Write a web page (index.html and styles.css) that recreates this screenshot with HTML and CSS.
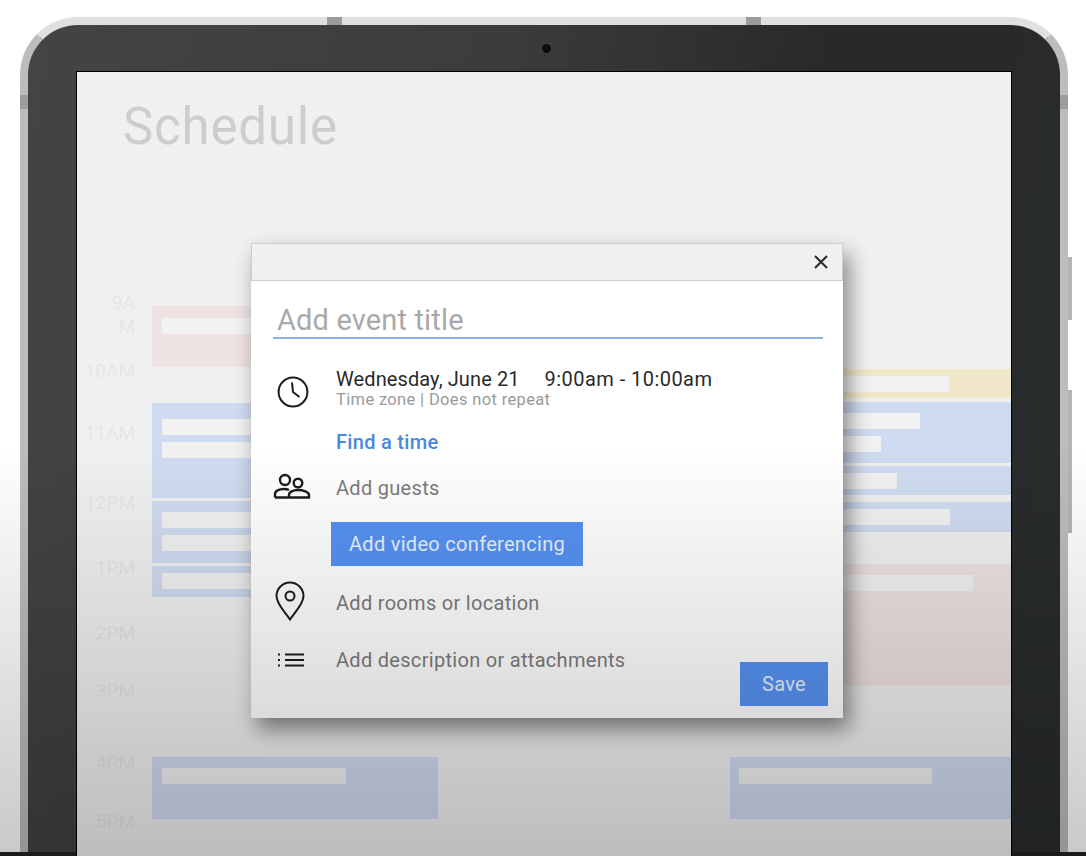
FILE: index.html
```html
<!DOCTYPE html>
<html lang="en">
<head>
<meta charset="UTF-8">
<meta name="viewport" content="width=device-width, initial-scale=1.0">
<title>Schedule</title>
<link rel="stylesheet" href="styles.css">
</head>
<body>

  <div class="tablet">
    <span class="side-btn side-btn-top"></span>
    <span class="side-btn side-btn-long"></span>
    <span class="notch notch-top-l"></span>
    <span class="notch notch-top-r"></span>
    <span class="notch notch-side-l"></span>
    <span class="notch notch-side-r"></span>
    <span class="camera"></span>

    <div class="screen">
      <h1 class="page-title">Schedule</h1>
      <div class="day-tabs"><span class="tab-line"></span><span class="tab-line tab-line-short"></span></div>

      <div class="calendar">
        <div class="hours">
          <div class="hour">9A<br>M</div>
          <div class="hour hour-10">10AM</div>
          <div class="hour hour-11">11AM</div>
          <div class="hour hour-12">12PM</div>
          <div class="hour hour-1">1PM</div>
          <div class="hour hour-2">2PM</div>
          <div class="hour hour-3">3PM</div>
          <div class="hour hour-4">4PM</div>
          <div class="hour hour-5">5PM</div>
        </div>

        <div class="day day-left">
          <div class="event red l1"><div class="bar"></div></div>
          <div class="event blue l2"><div class="bar"></div><div class="bar"></div></div>
          <div class="event blue l3"><div class="bar"></div><div class="bar"></div></div>
          <div class="event blue l4"><div class="bar"></div></div>
          <div class="event blue l5"><div class="bar bar-184"></div></div>
        </div>

        <div class="day day-right">
          <div class="event yellow r1"><div class="bar bar-210"></div></div>
          <div class="event blue r2"><div class="bar bar-181"></div><div class="bar bar-142"></div></div>
          <div class="event blue r3"><div class="bar bar-158"></div></div>
          <div class="event blue r4"><div class="bar bar-211"></div></div>
          <div class="event red r5"><div class="bar bar-234"></div></div>
          <div class="event blue r6"><div class="bar bar-193"></div></div>
        </div>
      </div>

      <div class="modal">
        <div class="modal-head">
          <svg class="close-icon" width="16" height="16" viewBox="0 0 16 16"><path d="M2 2l12 12M14 2L2 14"/></svg>
        </div>
        <div class="modal-body">
          <div class="event-title">Add event title</div>

          <div class="row row-when">
            <svg class="icon" width="32" height="32" viewBox="0 0 32 32"><circle cx="16" cy="16" r="14.4"/><path d="M15 6.5l1 9.5 6.5 5"/></svg>
            <div>
              <div class="when"><span class="when-date">Wednesday, June 21</span><span>9:00am - 10:00am</span></div>
              <div class="when-sub">Time zone | Does not repeat</div>
            </div>
          </div>

          <a class="find-time">Find a time</a>

          <div class="row row-guests">
            <svg class="icon icon-guests" width="38" height="26" viewBox="0 0 38 26"><circle cx="12" cy="7" r="5"/><circle cx="25" cy="10" r="4.300"/><path d="M2 24.500v-3.500c0-3 4-5 9-5 2 0 3.800.4 5 1M16 24.500v-2.500c0-3 4-5 9-5s11 2 11 5v2.500zM2 24.500h14"/></svg>
            <span class="row-text">Add guests</span>
          </div>

          <button class="btn btn-video">Add video conferencing</button>

          <div class="row row-rooms">
            <svg class="icon" width="30" height="40" viewBox="0 0 30 40"><path d="M15 38.500C10 31 1.500 23 1.500 15a13.500 13.500 0 0 1 27 0c0 8-8.500 16-13.500 23.500z"/><circle cx="15" cy="15" r="4.500"/></svg>
            <span class="row-text">Add rooms or location</span>
          </div>

          <div class="modal-foot">
            <div class="row">
              <svg class="icon icon-list" width="28" height="16" viewBox="0 0 28 16"><path d="M8 2.500h19M8 8h19M8 13.500h19M1 2.500h2M1 8h2M1 13.500h2"/></svg>
              <span class="row-text">Add description or attachments</span>
            </div>
            <button class="btn btn-save">Save</button>
          </div>
        </div>
      </div>
    </div>
  </div>
  <div class="bottom-strip"></div>
  <div class="fade"></div>

</body>
</html>
```

FILE: styles.css
```css
* {
  box-sizing: border-box;
}

html, body {
  height: 856px;
}

body {
  margin: 0;
  overflow: hidden;
  background-color: #fff;
  font-family: Roboto, 'Liberation Sans', sans-serif;
  position: relative;
}

/* darkening that runs over the whole lower half of the frame */
.fade {
  position: absolute;
  inset: 0;
  background: linear-gradient(to bottom, rgba(0, 0, 0, 0) 52%, rgba(0, 0, 0, 0.21) 100%);
  pointer-events: none;
}

.tablet {
  position: relative;
  width: 1048px;
  height: 835px;
  margin: 17px 0 0 20px;
  padding: 46px 48px 0;
  border: 8px solid #bcbcbc;
  border-top-color: #e0e0e0;
  border-bottom: 0;
  border-radius: 58px 58px 0 0;
  background: linear-gradient(100deg, #444 0%, #3c3c3c 40%, #272828 70%, #292c2d 100%);
}

.bottom-strip {
  height: 4px;
  background-color: #222;
}

.notch {
  position: absolute;
  background-color: #9c9c9c;
}

.notch-top-l, .notch-top-r {
  top: -8px;
  width: 15px;
  height: 8px;
}

.notch-top-l { left: 299px; }
.notch-top-r { left: 718px; }

.notch-side-l, .notch-side-r {
  top: 70px;
  width: 8px;
  height: 14px;
}

.notch-side-l { left: -8px; }
.notch-side-r { right: -8px; }

.side-btn {
  position: absolute;
  right: -12px;
  width: 4px;
  background-color: #b4b4b4;
}

.side-btn-top { top: 232px; height: 63px; }
.side-btn-long { top: 365px; height: 143px; }

.camera {
  position: absolute;
  top: 17px;
  left: 512px;
  width: 13px;
  height: 13px;
  border-radius: 50%;
  background-color: #0c0c0c;
  border: 2px solid #3c3c3c;
}

.screen {
  position: relative;
  height: 789px;
  border: 1px solid #000;
  border-bottom: 0;
  background-color: #f0f0f0;
  overflow: hidden;
}

.page-title {
  margin: 0;
  padding: 27px 0 0 46px;
  font-size: 51px;
  line-height: 56px;
  font-weight: 400;
  letter-spacing: 0.8px;
  color: #cdcdcd;
  filter: blur(0.5px);
}

.day-tabs {
  display: flex;
  margin: 26px 0 0 108px;
}

.tab-line {
  width: 190px;
  height: 1px;
  background-color: #ececec;
}

.tab-line-short {
  width: 85px;
  margin-left: 290px;
}

/* calendar, all stacked by gaps between hours and events */
.calendar {
  display: flex;
  margin-top: 109px;
  filter: blur(0.7px);
}

.hours {
  width: 58px;
  margin-right: 17px;
  text-align: right;
  font-size: 19px;
  line-height: 24px;
  color: #e5e5e5;
}

.hour-10 { margin-top: 20px; }
.hour-11 { margin-top: 38px; }
.hour-12 { margin-top: 46px; }
.hour-1 { margin-top: 41px; }
.hour-2 { margin-top: 41px; }
.hour-3 { margin-top: 34px; }
.hour-4 { margin-top: 48px; }
.hour-5 { margin-top: 35px; }

.day-left { width: 286px; }

.day-right {
  width: 281px;
  margin-left: auto;
}

.day-right .event { padding-left: 9px; }

.event {
  padding-left: 10px;
}

.event.blue { background-color: #cfdbf0; }
.event.red { background-color: #eee2e2; }
.event.yellow { background-color: #f1e8cb; }

.bar {
  height: 16px;
  margin-bottom: 7px;
  background-color: #f1f1f1;
}

.bar-184 { width: 184px; }
.bar-210 { width: 210px; }
.bar-181 { width: 181px; }
.bar-142 { width: 142px; }
.bar-158 { width: 158px; }
.bar-211 { width: 211px; }
.bar-234 { width: 234px; }
.bar-193 { width: 193px; }

.l1 { margin-top: 15px; height: 61px; padding-top: 12px; }
.l2 { margin-top: 36px; height: 95px; padding-top: 16px; }
.l3 { margin-top: 3px; height: 62px; padding-top: 11px; }
.l4 { margin-top: 3px; height: 31px; padding-top: 7px; }
.l5 { margin-top: 160px; height: 62px; padding-top: 11px; }

.r1 { margin-top: 78px; height: 29px; padding-top: 7px; }
.r2 { margin-top: 4px; height: 61px; padding-top: 11px; }
.r3 { margin-top: 3px; height: 29px; padding-top: 7px; }
.r4 { margin-top: 7px; height: 30px; padding-top: 7px; }
.r5 { margin-top: 32px; height: 122px; padding-top: 11px; }
.r6 { margin-top: 71px; height: 62px; padding-top: 11px; }

/* dialog */
.modal {
  position: absolute;
  top: 171px;
  left: 174px;
  width: 592px;
  height: 475px;
  background-color: #fff;
  box-shadow: 6px 11px 20px rgba(0, 0, 0, 0.45);
}

.modal-head {
  display: flex;
  justify-content: flex-end;
  align-items: center;
  height: 38px;
  padding-right: 13px;
  background-color: #f0f0f0;
  border: 1px solid #cdcdcd;
}

.close-icon {
  fill: none;
  stroke: #2a2a2a;
  stroke-width: 2;
}

.modal-body {
  padding: 22px 15px 0 22px;
  letter-spacing: 0.3px;
}

.event-title {
  margin-right: 5px;
  padding-left: 4px;
  height: 36px;
  font-size: 29px;
  line-height: 34px;
  letter-spacing: 0.15px;
  color: #a9a9a9;
  border-bottom: 2px solid #8fb0e0;
}

.row {
  display: flex;
  align-items: center;
}

.icon {
  flex: none;
  fill: none;
  stroke: #1c1c1c;
  stroke-width: 2;
}

.icon-guests {
  stroke-width: 2.4;
}

.row-when {
  margin-top: 29px;
}

.row-when .icon {
  margin: 5px 27px 0 4px;
}

.when {
  display: flex;
  gap: 25px;
  font-size: 20px;
  line-height: 22px;
  letter-spacing: 0.45px;
  color: #2a2a2a;
}

.when-date {
  letter-spacing: 0.1px;
}

.when-sub {
  font-size: 16.5px;
  line-height: 20px;
  letter-spacing: 0.35px;
  color: #9a9a9a;
}

.find-time {
  display: block;
  margin: 20px 0 0 63px;
  font-size: 20px;
  line-height: 24px;
  font-weight: 500;
  color: #4a86e0;
}

.row-text {
  font-size: 20px;
  line-height: 24px;
  color: #7c7c7c;
}

.row-guests {
  align-items: flex-start;
  margin-top: 19px;
}

.row-guests .icon {
  margin-right: 25px;
}

.row-guests .row-text {
  margin-top: 3px;
}

.btn {
  display: block;
  border: 0;
  padding: 0;
  font-family: inherit;
  font-size: 20px;
  letter-spacing: 0.3px;
  color: #e8f0fc;
  background-color: #5592f2;
}

.btn-video {
  width: 252px;
  height: 44px;
  margin: 22px 0 0 58px;
}

.row-rooms {
  margin-top: 15px;
}

.row-rooms .icon {
  margin: 0 31px 0 2px;
}

.row-rooms .row-text {
  padding-top: 4px;
}

.modal-foot {
  display: flex;
  justify-content: space-between;
  align-items: flex-start;
  margin-top: 27px;
}

.icon-list {
  margin: 0 31px 0 4px;
}

.btn-save {
  width: 88px;
  height: 44px;
  margin-top: 14px;
}
```
